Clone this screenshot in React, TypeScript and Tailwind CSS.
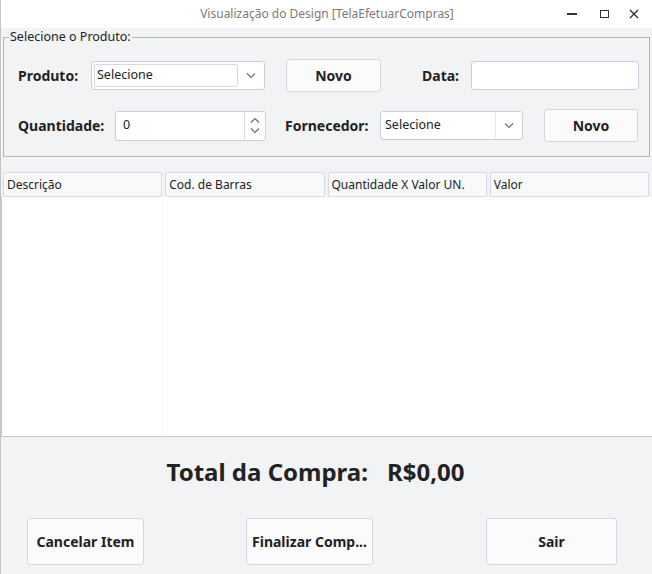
import React from 'react';

function Chevron({ up = false }: { up?: boolean }) {
  return (
    <svg width="10" height="6" viewBox="0 0 10 6" fill="none" stroke="#6b6f78" strokeWidth="1.2">
      <path d={up ? 'M1 5.5 5 1.5 9 5.5' : 'M1 0.5 5 4.5 9 0.5'} />
    </svg>
  );
}

function Combo({ width, editable }: { width: number; editable?: boolean }) {
  return (
    <div
      className="flex h-[29px] rounded-[3px] border border-[#c9cedb] bg-white"
      style={{ width }}
    >
      {editable ? (
        <div className="m-[2px] mr-0 flex flex-1 items-center rounded-[2px] border border-[#d5d9e4] pl-[2px] text-[12.5px] text-[#222]">
          Selecione
        </div>
      ) : (
        <div className="flex flex-1 items-center border-r border-[#e6e8ee] pl-[4px] text-[12.5px] text-[#222]">
          Selecione
        </div>
      )}
      <div className="flex w-[26px] items-center justify-center">
        <Chevron />
      </div>
    </div>
  );
}

function Btn({ label, className }: { label: string; className: string }) {
  return (
    <button
      className={`flex items-center justify-center rounded-[3px] border border-[#d3d7e1] bg-[#fbfbfc] text-[14px] font-bold text-[#222] ${className}`}
    >
      {label}
    </button>
  );
}

export default function App() {
  const headers = ['Descrição', 'Cod. de Barras', 'Quantidade X Valor UN.', 'Valor'];
  return (
    <div
      className="flex h-[574px] w-[652px] flex-col overflow-hidden border-l border-[#c4c4c4] bg-[#f2f3f5]"
      style={{ fontFamily: '"Noto Sans", "Open Sans", sans-serif' }}
    >
      {/* Title bar */}
      <div className="flex h-[28px] items-center bg-white">
        <div className="flex-1 pl-[97px] text-center text-[12px] text-[#7a7a7a]">
          Visualização do Design [TelaEfetuarCompras]
        </div>
        <div className="flex items-center">
          <div className="flex w-[32px] justify-center">
            <div className="h-[1.5px] w-[10px] bg-[#333]" />
          </div>
          <div className="flex w-[32px] justify-center">
            <div className="h-[8px] w-[9px] border-[1.5px] border-[#333]" />
          </div>
          <div className="flex w-[32px] justify-center pr-[4px]">
            <svg width="10" height="10" viewBox="0 0 10 10" stroke="#333" strokeWidth="1.4">
              <path d="M1 1 9 9M9 1 1 9" />
            </svg>
          </div>
        </div>
      </div>

      {/* Group box */}
      <fieldset className="mx-[2px] mt-[1px] h-[128px] border border-[#b4b6bb] pl-[14px] pr-0">
        <legend className="-ml-[9px] px-[1px] text-[12.5px] leading-[16px] text-[#222]">
          Selecione o Produto:
        </legend>
        <div className="mt-[14px] flex h-[33px] items-center">
          <span className="w-[73px] text-[14px] font-bold text-[#222]">Produto:</span>
          <Combo width={174} editable />
          <Btn label="Novo" className="ml-[21px] h-[33px] w-[95px]" />
          <span className="ml-[41px] w-[49px] text-[14px] font-bold text-[#222]">Data:</span>
          <div className="h-[29px] w-[168px] rounded-[3px] border border-[#c9cedb] bg-white" />
        </div>
        <div className="mt-[17px] flex h-[33px] items-center">
          <span className="w-[97px] text-[14px] font-bold text-[#222]">Quantidade:</span>
          <div className="flex h-[30px] w-[151px] rounded-[3px] border border-[#c9cedb] bg-white">
            <div className="flex flex-1 items-center border-r border-[#d5d9e4] pl-[7px] text-[12.5px] text-[#222]">
              0
            </div>
            <div className="flex w-[20px] flex-col items-center justify-center gap-[5px]">
              <Chevron up />
              <Chevron />
            </div>
          </div>
          <span className="ml-[19px] w-[95px] text-[14px] font-bold text-[#222]">Fornecedor:</span>
          <Combo width={143} />
          <Btn label="Novo" className="ml-[21px] h-[33px] w-[94px]" />
        </div>
      </fieldset>

      {/* Table */}
      <div className="mt-[15px] flex gap-[3px] pl-[2px] pr-[3px]">
        {headers.map((h) => (
          <div
            key={h}
            className="flex h-[25px] flex-1 items-center rounded-[2px] border border-[#d6dae5] bg-[#f8f9fb] pl-[3px] text-[12px] text-[#222]"
          >
            {h}
          </div>
        ))}
      </div>
      <div className="flex h-[240px] border-b border-l border-[#c6c8cc] bg-white">
        <div className="w-[161px] border-r border-[#f6f6f7]" />
        <div className="flex-1" />
      </div>

      {/* Total */}
      <div className="mt-[17px] flex justify-center gap-[19px] pr-[22px] text-[24px] font-bold text-[#222]">
        <span>Total da Compra:</span>
        <span>R$0,00</span>
      </div>

      {/* Actions */}
      <div className="mt-[28px] flex pl-[26px]">
        <Btn label="Cancelar Item" className="h-[47px] w-[117px]" />
        <Btn label="Finalizar Comp..." className="ml-[102px] h-[47px] w-[127px]" />
        <Btn label="Sair" className="ml-[113px] h-[47px] w-[131px]" />
      </div>
    </div>
  );
}
